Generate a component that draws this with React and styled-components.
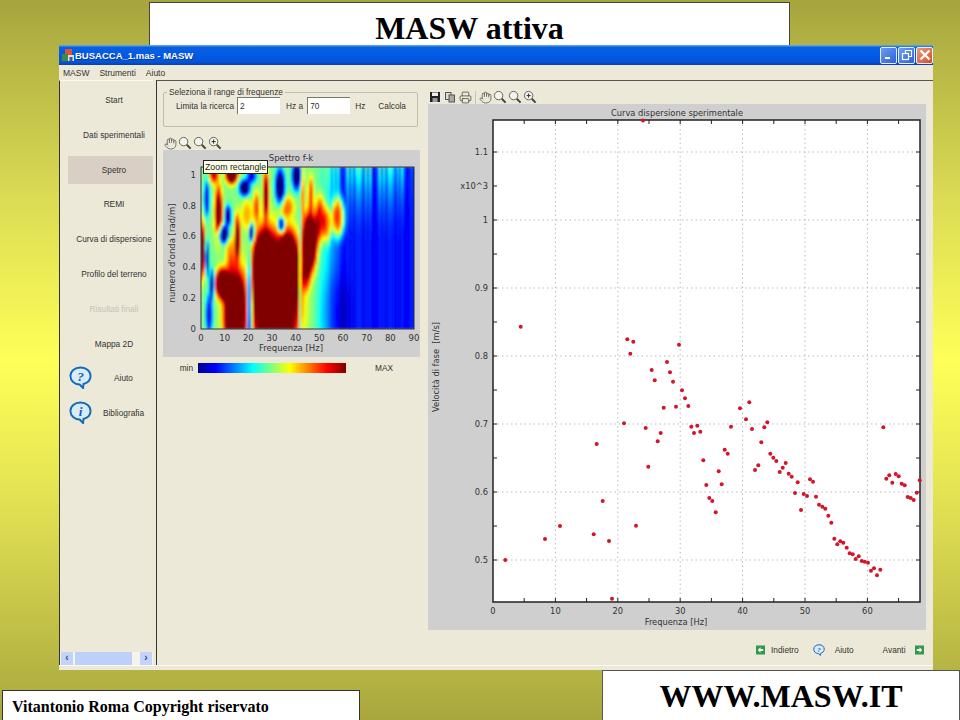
import React from 'react';
import styled, { createGlobalStyle } from 'styled-components';
import { Hand, Printer } from 'lucide-react';

const GlobalStyle = createGlobalStyle`
  html, body { margin: 0; padding: 0; background: #fff; }
  body { font-family: "Liberation Sans", Arial, sans-serif; }
`;

// ---- data read off the reference ----

const sideItems = [
  { label: 'Start' },
  { label: 'Dati sperimentali' },
  { label: 'Spetro', active: true },
  { label: 'REMI' },
  { label: 'Curva di dispersione' },
  { label: 'Profilo del terreno' },
  { label: 'Risultati finali', disabled: true },
  { label: 'Mappa 2D' },
  { label: 'Aiuto', bubble: '?' },
  { label: 'Bibliografia', bubble: 'i' },
];

// scatter points in page pixels, shifted to the chart origin when drawn
const points = [
  [520.7,326.7],[627.3,339.3],[633.3,341.7],[630.3,353.7],[679,344.7],[667,362],[651.7,370],[670,372.3],
  [654.7,380.3],[673,381.7],[682,390.3],[685,398.3],[688.3,406],[663.7,407.7],[676,406.7],[624,423.3],
  [645.7,428],[691.3,426.7],[697.3,425.7],[694,433],[700.3,431.7],[660.7,433],[657.7,441.3],[596.7,444],
  [703.3,460.3],[648.3,466.7],[718.7,471.3],[706.3,485],[709.3,498],[712.3,501],[715.7,512.3],[602.7,501],
  [560,526],[636,525.7],[593.7,534.3],[545,539],[609,541],[505.3,560],[612,598.7],[749.3,402.3],[740,408.3],
  [746,419.3],[752,429],[767.3,422.3],[764.3,427.3],[731,426.7],[761.3,442.3],[724.7,449.7],[727.7,453.7],
  [770.3,453.7],[773.3,457.7],[776.3,461],[785.7,463],[758.3,465.3],[782.7,467.7],[755,470],[779.7,472],
  [788.7,473.7],[791.7,476.7],[810,479.3],[813,481.7],[797.7,482.3],[721.7,484.3],[795,493],[803.7,494],
  [807,496],[816,496.7],[801,510],[819,504.7],[822.3,506.7],[825.3,508.7],[828.3,515.7],[831.3,522.7],
  [834.3,538.7],[837.3,544.3],[840.3,541.3],[843.3,542.7],[846.7,547.7],[849.7,553.3],[852.7,554.3],
  [858.7,556.3],[855.7,559],[861.7,561],[864.7,561.7],[868,562.7],[871,570.7],[874,568.3],[877,575.3],
  [880.3,569.7],[883.3,427.3],[886.3,478.7],[889.3,475.3],[892.3,482.7],[895.7,474],[898.7,476.3],
  [901.7,483.7],[904.7,485.3],[907.7,497],[910.7,498],[913.7,500],[916.7,492.7],[919.7,480.3],[643,120.5],
];

// spectrum: hz, k, radius hz, radius k, amount
const blobs = [
  [31, 0.2, 10, 0.4, 0.95], [26, 0.42, 4.5, 0.24, 0.65], [37, 0.42, 4, 0.22, 0.65],
  [14, 0.1, 4.8, 0.3, 0.9], [8.5, 0.3, 3, 0.1, 0.75],
  [45.5, 0.57, 3.2, 0.19, 0.85], [44, 0.35, 2, 0.1, 0.3], [12.5, 1.02, 2.6, 0.07, 0.85],
  [7, 0.76, 1.8, 0.18, 0.55], [0.2, 0.52, 1, 0.18, 0.7], [15, 0.6, 1.3, 0.15, 0.55], [27, 0.88, 1.3, 0.16, 0.55],
  [23, 0.8, 1.4, 0.1, 0.3], [57.5, 0.73, 2.8, 0.13, 0.6], [53, 0.68, 1.7, 0.12, 0.35], [50, 0.72, 2.2, 0.15, 0.45],
  [36, 0.8, 3, 0.07, 0.25], [19, 0.75, 2.5, 0.1, 0.2], [12, 0.5, 2, 0.12, 0.2], [42.5, 0.9, 1, 0.2, 0.25],
  [46, 0.88, 1.3, 0.12, 0.3], [5, 1.02, 2, 0.07, 0.45],
  [18, 0.92, 2.4, 0.055, -0.6], [33, 0.93, 2.2, 0.12, -0.6], [9, 0.62, 2.4, 0.06, -0.6], [11, 0.74, 1.5, 0.07, -0.5],
  [21, 0.63, 1, 0.06, -0.6], [33.5, 0.68, 1.5, 0.05, -0.6], [4.3, 0.3, 1, 0.09, -0.6], [2.4, 0.46, 0.8, 0.11, -0.55],
  [20, 0.12, 1.2, 0.35, -0.65], [40, 1, 2.2, 0.1, -0.55], [21, 1, 2.2, 0.05, -0.4], [2, 0.85, 1.3, 0.12, -0.4],
  [3, 0.1, 1.6, 0.14, -0.4], [55, 0.1, 7, 0.28, -0.1], [41.5, 0.25, 0.5, 0.5, -0.3],
];

const jet = (v) => {
  const c = (d) => Math.round(255 * Math.max(0, Math.min(1, 1.5 - Math.abs(4 * v - d))));
  return `rgb(${c(3)},${c(2)},${c(1)})`;
};

const spectrumValue = (hz, k) => {
  const t = Math.max(0, Math.min(1, (hz - 46) / 16));
  const high = t * t * (3 - 2 * t);
  const stripe = 0.5 + 0.5 * Math.sin(hz * 2.3 + Math.sin(hz * 0.9) * 2);
  const top = Math.max(0, (k - 0.55) / 0.5);
  let v = 0.5 * (1 - high) + high * (0.11 + 0.05 * stripe + top * top * stripe * (hz > 86 ? 0.05 : 0.3));
  blobs.forEach(([h, c, rh, rk, a]) => {
    const dx = (hz - h) / rh;
    const dy = (k - c) / rk;
    v += a * Math.exp(-Math.pow(dx * dx + dy * dy, 1.5));
  });
  return Math.max(0, Math.min(1, v));
};

const PW = 213;
const PH = 162;
const cells = [];
for (let y = 0; y < PH; y += 2) {
  for (let x = 0; x < PW; x += 2) {
    cells.push({ x, y, fill: jet(spectrumValue((x / PW) * 90, 1.05 - (y / PH) * 1.05)) });
  }
}

// ---- small drawings ----

const Magnifier = ({ mark }) => (
  <svg width="14" height="14" viewBox="0 0 14 14" fill="none">
    <circle cx="5.6" cy="5.6" r="4.2" fill="#f4f4ee" stroke="#666" strokeWidth="1" />
    <path d="M8.8 8.8L12.6 12.6" strokeWidth="2" stroke="#444" />
    {mark && <path d="M3.5 5.6h4.2M5.6 3.5v4.2" strokeWidth="1" stroke="#333" />}
  </svg>
);

const Floppy = () => (
  <svg width="12" height="12" viewBox="0 0 12 12">
    <rect x="1" y="1" width="10" height="10" fill="#222" />
    <rect x="3" y="1.5" width="6" height="3.5" fill="#eee" />
    <rect x="3.5" y="7" width="5" height="4" fill="#999" />
  </svg>
);

const Copy = () => (
  <svg width="12" height="12" viewBox="0 0 12 12" stroke="#555" fill="#ddd">
    <rect x="1.5" y="1.5" width="5.5" height="7" />
    <rect x="5" y="4" width="5.5" height="7" fill="#aaa" />
  </svg>
);

const AppIcon = () => (
  <svg width="14" height="14" viewBox="0 0 14 14">
    <rect x="4" y="1" width="7" height="6" fill="#d8533a" />
    <rect x="1" y="6" width="6" height="7" fill="#3b8a4a" />
    <rect x="7" y="7" width="6" height="6" fill="#e9e2c8" />
    <rect x="8.5" y="9" width="3" height="4" fill="#2e5fa8" />
  </svg>
);

const HelpBubble = ({ mark, size = 23 }) => (
  <svg width={size} height={size} viewBox="0 0 24 24">
    <path d="M12 1.5C5.8 1.5 1.5 5.4 1.5 10.5c0 5 4.2 8.8 9.6 8.8l3.6 3.7.4-4.2c4.3-1.2 7.4-4.3 7.4-8.3 0-5.1-4.3-9-10.5-9z" fill="#d7ecfb" stroke="#1668b8" strokeWidth="2" />
    <text x="12" y="15.5" textAnchor="middle" fontFamily="Liberation Serif, serif" fontStyle="italic" fontWeight="bold" fontSize="14" fill="#1a5fb0">{mark}</text>
  </svg>
);

const NavArrow = ({ flip }) => (
  <svg width="9" height="10" viewBox="0 0 10 10">
    <rect width="10" height="10" fill="#2f9a4a" />
    <path d={flip ? 'M2 4h3V2l3 3-3 3V6H2z' : 'M8 4H5V2L2 5l3 3V6h3z'} fill="#fff" />
  </svg>
);

// ---- the two plots ----

const SpectrumPlot = () => (
  <svg width="257" height="207" viewBox="0 0 257 207">
    <defs>
      <filter id="soft" x="0" y="0" width="100%" height="100%"><feGaussianBlur stdDeviation="1" /></filter>
      <clipPath id="plotClip"><rect x="38" y="17" width={PW} height={PH} /></clipPath>
    </defs>
    <g clipPath="url(#plotClip)">
      <g transform="translate(38 17)" filter="url(#soft)" shapeRendering="crispEdges">
        {cells.map((c) => <rect key={`${c.x}-${c.y}`} x={c.x} y={c.y} width="2" height="2" fill={c.fill} />)}
      </g>
    </g>
    <rect x="38" y="17" width={PW} height={PH} fill="none" stroke="#111" strokeWidth="0.8" />
    <g fontFamily="DejaVu Sans, sans-serif" fontSize="8.5" fill="#333">
      <text x="128" y="11" textAnchor="middle">Spettro f-k</text>
      {[0, 10, 20, 30, 40, 50, 60, 70, 80, 90].map((t) => (
        <text key={t} x={38 + (t / 90) * PW} y="191" textAnchor="middle">{t}</text>
      ))}
      {[0, 0.2, 0.4, 0.6, 0.8, 1].map((t) => (
        <text key={t} x="33" y={182 - (t / 1.05) * PH} textAnchor="end">{t}</text>
      ))}
      <text x="128" y="201" textAnchor="middle">Frequenza [Hz]</text>
      <text transform="translate(12 103) rotate(-90)" textAnchor="middle">numero d'onda [rad/m]</text>
    </g>
  </svg>
);

const DispersionChart = () => {
  // page position of the plot frame, minus the chart origin at 428,104
  const left = 65, top = 16, right = 492, bottom = 498;
  const xAt = (hz) => left + hz * 6.24;
  const yAt = (v) => 456 - (v - 0.5) * 680;
  return (
    <svg width="498" height="526" viewBox="0 0 498 526">
      <rect x={left} y={top} width={right - left} height={bottom - top} fill="#fff" />
      <g stroke="#bbb" strokeWidth="1" strokeDasharray="1.5 3">
        {[10, 20, 30, 40, 50, 60].map((t) => <line key={t} x1={xAt(t)} x2={xAt(t)} y1={top} y2={bottom} />)}
        {[0.5, 0.6, 0.7, 0.8, 0.9, 1, 1.1].map((t) => <line key={t} x1={left} x2={right} y1={yAt(t)} y2={yAt(t)} />)}
      </g>
      <g stroke="#222" strokeWidth="1">
        {[5, 10, 15, 20, 25, 30, 35, 40, 45, 50, 55, 60, 65].map((t) => (
          <g key={t}>
            <line x1={xAt(t)} x2={xAt(t)} y1={top} y2={top + 4} />
            <line x1={xAt(t)} x2={xAt(t)} y1={bottom} y2={bottom - 4} />
          </g>
        ))}
        {[0.5, 0.55, 0.6, 0.65, 0.7, 0.75, 0.8, 0.85, 0.9, 0.95, 1, 1.05, 1.1].map((t) => (
          <g key={t}>
            <line x1={left} x2={left + 4} y1={yAt(t)} y2={yAt(t)} />
            <line x1={right} x2={right - 4} y1={yAt(t)} y2={yAt(t)} />
          </g>
        ))}
      </g>
      <rect x={left} y={top} width={right - left} height={bottom - top} fill="none" stroke="#222" strokeWidth="1.5" />
      <g fill="#d4142a">
        {points.map(([x, y]) => <circle key={`${x}-${y}`} cx={x - 428} cy={y - 104} r="2" />)}
      </g>
      <g fontFamily="DejaVu Sans, sans-serif" fontSize="8.3" fill="#333">
        <text x="249" y="12" textAnchor="middle">Curva dispersione sperimentale</text>
        {[0.5, 0.6, 0.7, 0.8, 0.9, 1, 1.1].map((t) => (
          <text key={t} x="60" y={yAt(t) + 3} textAnchor="end">{t}</text>
        ))}
        <text x="60" y={yAt(1.05) + 3} textAnchor="end">x10^3</text>
        {[0, 10, 20, 30, 40, 50, 60].map((t) => (
          <text key={t} x={xAt(t)} y="510" textAnchor="middle">{t}</text>
        ))}
        <text x="248" y="521" textAnchor="middle">Frequenza [Hz]</text>
        <text transform="translate(11 263) rotate(-90)" textAnchor="middle" xmlSpace="preserve">Velocità di fase  [m/s]</text>
      </g>
    </svg>
  );
};

// ---- page ----

const Slide = styled.div`
  width: 960px;
  height: 720px;
  box-sizing: border-box;
  padding: 2px 0 0 2px;
  display: flex;
  flex-direction: column;
  overflow: hidden;
  background: linear-gradient(180deg, #a6a53e 0%, #dcdc55 28%, #ffff58 50%, #dedd52 72%, #a8a73e 100%);
`;

const TitleBox = styled.div`
  margin-left: 147px;
  width: 641px;
  height: 43px;
  box-sizing: border-box;
  flex: none;
  background: #fff;
  border: 1px solid #444;
  border-bottom: none;
  text-align: center;
  font: bold 32px/50px "Liberation Serif", "Times New Roman", serif;
  color: #000;
`;

const Window = styled.div`
  margin-left: 57px;
  width: 874px;
  height: 625px;
  flex: none;
  display: flex;
  flex-direction: column;
  background: #ece9d8;
`;

const TitleBar = styled.div`
  height: 20px;
  flex: none;
  display: flex;
  align-items: center;
  padding-left: 2px;
  color: #fff;
  font: bold 9.5px "Liberation Sans", sans-serif;
  background: linear-gradient(180deg, #5fb4f5 0%, #0a5fe0 12%, #0259e6 55%, #0455d8 85%, #0a3fa8 100%);
`;

const WindowTitle = styled.span`
  flex: 1;
  text-shadow: 1px 1px 0 #0a3a90;
`;

const WinButton = styled.div`
  width: 17px;
  height: 17px;
  margin-left: 1px;
  box-sizing: border-box;
  border: 1px solid #e8eefc;
  border-radius: 2px;
  background: ${(p) => (p.$close ? 'linear-gradient(135deg,#ec9a7c,#d8492a)' : 'linear-gradient(135deg,#6f9cf0,#2a62d8)')};
  color: #fff;
  display: flex;
  align-items: center;
  justify-content: center;
`;

const MenuBar = styled.div`
  height: 15px;
  flex: none;
  display: flex;
  align-items: center;
  gap: 10px;
  padding-left: 4px;
  font-size: 8.5px;
  color: #333;
`;

const Body = styled.div`
  height: 585px;
  flex: none;
  display: flex;
`;

const StatusStrip = styled.div`
  flex: 1;
  border-top: 1px solid #fbfaf4;
`;

const Sidebar = styled.div`
  width: 94px;
  margin-right: 3px;
  flex: none;
  display: flex;
  flex-direction: column;
  border-left: 1px solid #333;
  border-top: 1px solid #fbfaf4;
  box-sizing: border-box;
`;

const SideList = styled.div`
  flex: 1;
  padding: 5px 0 0 8px;
  display: flex;
  flex-direction: column;
`;

const SideItem = styled.div`
  height: 28px;
  margin-bottom: 6.8px;
  padding-left: ${(p) => (p.$bubble ? 26 : 7)}px;
  display: flex;
  align-items: center;
  justify-content: center;
  position: relative;
  font-size: 8.3px;
  color: ${(p) => (p.$disabled ? '#c4c2b8' : '#333')};
  background: ${(p) => (p.$active ? '#d9cfc5' : 'transparent')};
`;

const BubbleSlot = styled.span`
  position: absolute;
  left: 1px;
  top: 2px;
`;

const ScrollBar = styled.div`
  height: 13px;
  flex: none;
  padding: 0 1px;
  display: flex;
  justify-content: space-between;
  background: #f4f3ec;
`;

const ScrollButton = styled.span`
  width: 12px;
  background: #c3d4f8;
  color: #2a4a90;
  font: bold 10px/12px "Liberation Sans", sans-serif;
  text-align: center;
`;

const ScrollThumb = styled.span`
  width: 57px;
  margin-right: 7px;
  background: #bdd0fa;
`;

const Content = styled.div`
  flex: 1;
  display: flex;
  gap: 8px;
  padding: 0 0 0 6px;
  border-left: 1px solid #333;
  border-top: 1px solid #555;
  box-sizing: border-box;
`;

const LeftColumn = styled.div`
  width: 257px;
  flex: none;
  display: flex;
  flex-direction: column;
`;

const RightColumn = styled.div`
  width: 498px;
  flex: none;
  display: flex;
  flex-direction: column;
`;

const RangeGroup = styled.fieldset`
  margin: 6px 2px 0 0;
  padding: 0 0 0 12px;
  height: 40px;
  box-sizing: border-box;
  border: 1px solid #c0bdae;
  border-radius: 2px;
  display: flex;
  align-items: center;
  white-space: nowrap;
  font-size: 8.3px;
  color: #333;
`;

const RangeLegend = styled.legend`
  padding: 0 2px;
  margin-left: -9px;
  font-size: 8.3px;
  color: #333;
`;

const RangeInput = styled.input`
  width: 43px;
  height: 17px;
  flex: none;
  margin: 0 ${(p) => p.$after}px 0 3px;
  padding: 0 0 0 2px;
  box-sizing: border-box;
  border: none;
  border-top: 1px solid #77756c;
  border-left: 1px solid #77756c;
  background: #fff;
  font: 8.3px "Liberation Sans", sans-serif;
  color: #333;
`;

const RangeUnit = styled.span`
  margin-right: ${(p) => p.$after}px;
`;

const Toolbar = styled.div`
  height: ${(p) => p.$height}px;
  flex: none;
  display: flex;
  align-items: flex-end;
  gap: 1px;
`;

const ToolSlot = styled.span`
  width: 14px;
  height: 14px;
  display: flex;
  align-items: center;
  justify-content: center;
  color: #444;
`;

const ToolSeparator = styled.span`
  width: 1px;
  height: 13px;
  margin: 0 1px 0 2px;
  background: #c8c5b5;
`;

const PlotPanel = styled.div`
  height: 207px;
  flex: none;
  position: relative;
  background: #cfcfcf;
  line-height: 0;
`;

const Tooltip = styled.div`
  position: absolute;
  left: 40px;
  top: 10px;
  padding: 0 1px;
  border: 1px solid #222;
  background: #ffffe8;
  color: #222;
  font: 8.8px/12px "Liberation Sans", sans-serif;
  white-space: nowrap;
`;

const ScaleRow = styled.div`
  margin-top: 6px;
  height: 10px;
  display: flex;
  align-items: center;
  font-size: 8.3px;
  color: #333;
`;

const ScaleMin = styled.span`
  width: 30px;
  margin-right: 5px;
  text-align: right;
`;

const ScaleBar = styled.div`
  width: 148px;
  height: 10px;
  margin-right: 29px;
  background: linear-gradient(90deg, #00008f 0%, #0000ff 12%, #00ffff 37%, #ffff00 62%, #ff0000 87%, #800000 100%);
`;

const ChartPanel = styled.div`
  height: 526px;
  flex: none;
  background: #cfcfcf;
  line-height: 0;
`;

const NavRow = styled.div`
  margin-top: 13px;
  height: 13px;
  display: flex;
  align-items: center;
  font-size: 8.3px;
  color: #333;
`;

const NavItem = styled.span`
  display: flex;
  align-items: center;
  gap: ${(p) => p.$gap}px;
  margin-left: ${(p) => p.$left}px;
`;

const Footer = styled.div`
  flex: 1;
  display: flex;
  justify-content: space-between;
  align-items: flex-end;
  color: #000;
`;

const CreditBox = styled.div`
  width: 358px;
  height: 30px;
  box-sizing: border-box;
  padding-left: 9px;
  background: #fff;
  border: 1px solid #333;
  border-bottom: none;
  font: bold 16px/32px "Liberation Serif", "Times New Roman", serif;
`;

const SiteBox = styled.div`
  width: 358px;
  height: 50px;
  box-sizing: border-box;
  background: #fff;
  border: 1px solid #555;
  border-bottom: none;
  text-align: center;
  font: bold 32px/50px "Liberation Serif", "Times New Roman", serif;
`;

export default function App() {
  return (
    <>
      <GlobalStyle />
      <Slide>
        <TitleBox>MASW attiva</TitleBox>
        <Window>
          <TitleBar>
            <AppIcon />
            <WindowTitle>BUSACCA_1.mas - MASW</WindowTitle>
            <WinButton>
              <svg width="10" height="10" viewBox="0 0 10 10"><rect x="1" y="7" width="5" height="2" fill="#fff" /></svg>
            </WinButton>
            <WinButton>
              <svg width="12" height="12" viewBox="0 0 12 12" fill="none" stroke="#fff" strokeWidth="1.2"><rect x="1.5" y="4.5" width="6" height="6" /><path d="M4.5 4.5V1.5h6v6h-3" /></svg>
            </WinButton>
            <WinButton $close>
              <svg width="12" height="12" viewBox="0 0 12 12" stroke="#fff" strokeWidth="2.4"><path d="M1.5 1.5l9 9M10.5 1.5l-9 9" /></svg>
            </WinButton>
          </TitleBar>
          <MenuBar>
            <span>MASW</span>
            <span>Strumenti</span>
            <span>Aiuto</span>
          </MenuBar>
          <Body>
            <Sidebar>
              <SideList>
                {sideItems.map((item) => (
                  <SideItem key={item.label} $active={item.active} $disabled={item.disabled} $bubble={item.bubble}>
                    {item.bubble && <BubbleSlot><HelpBubble mark={item.bubble} /></BubbleSlot>}
                    {item.label}
                  </SideItem>
                ))}
              </SideList>
              <ScrollBar>
                <ScrollButton>‹</ScrollButton>
                <ScrollThumb />
                <ScrollButton>›</ScrollButton>
              </ScrollBar>
            </Sidebar>
            <Content>
              <LeftColumn>
                <RangeGroup>
                  <RangeLegend>Seleziona il range di frequenze</RangeLegend>
                  <span>Limita la ricerca</span>
                  <RangeInput $after={6} defaultValue="2" />
                  <RangeUnit $after={1}>Hz a</RangeUnit>
                  <RangeInput $after={5} defaultValue="70" />
                  <RangeUnit $after={13}>Hz</RangeUnit>
                  <span>Calcola</span>
                </RangeGroup>
                <Toolbar $height={23}>
                  <ToolSlot><Hand size={13} strokeWidth={1.3} /></ToolSlot>
                  <ToolSlot><Magnifier /></ToolSlot>
                  <ToolSlot><Magnifier /></ToolSlot>
                  <ToolSlot><Magnifier mark /></ToolSlot>
                </Toolbar>
                <PlotPanel>
                  <SpectrumPlot />
                  <Tooltip>Zoom rectangle</Tooltip>
                </PlotPanel>
                <ScaleRow>
                  <ScaleMin>min</ScaleMin>
                  <ScaleBar />
                  <span>MAX</span>
                </ScaleRow>
              </LeftColumn>
              <RightColumn>
                <Toolbar $height={23}>
                  <ToolSlot><Floppy /></ToolSlot>
                  <ToolSlot><Copy /></ToolSlot>
                  <ToolSlot><Printer size={13} strokeWidth={1.4} /></ToolSlot>
                  <ToolSeparator />
                  <ToolSlot><Hand size={13} strokeWidth={1.3} /></ToolSlot>
                  <ToolSlot><Magnifier /></ToolSlot>
                  <ToolSlot><Magnifier /></ToolSlot>
                  <ToolSlot><Magnifier mark /></ToolSlot>
                </Toolbar>
                <ChartPanel>
                  <DispersionChart />
                </ChartPanel>
                <NavRow>
                  <NavItem $left={328} $gap={6}><NavArrow />Indietro</NavItem>
                  <NavItem $left={14} $gap={10}><HelpBubble mark="?" size={12} />Aiuto</NavItem>
                  <NavItem $left={29} $gap={9}>Avanti<NavArrow flip /></NavItem>
                </NavRow>
              </RightColumn>
            </Content>
          </Body>
          <StatusStrip />
        </Window>
        <Footer>
          <CreditBox>Vitantonio Roma Copyright riservato</CreditBox>
          <SiteBox>WWW.MASW.IT</SiteBox>
        </Footer>
      </Slide>
    </>
  );
}
